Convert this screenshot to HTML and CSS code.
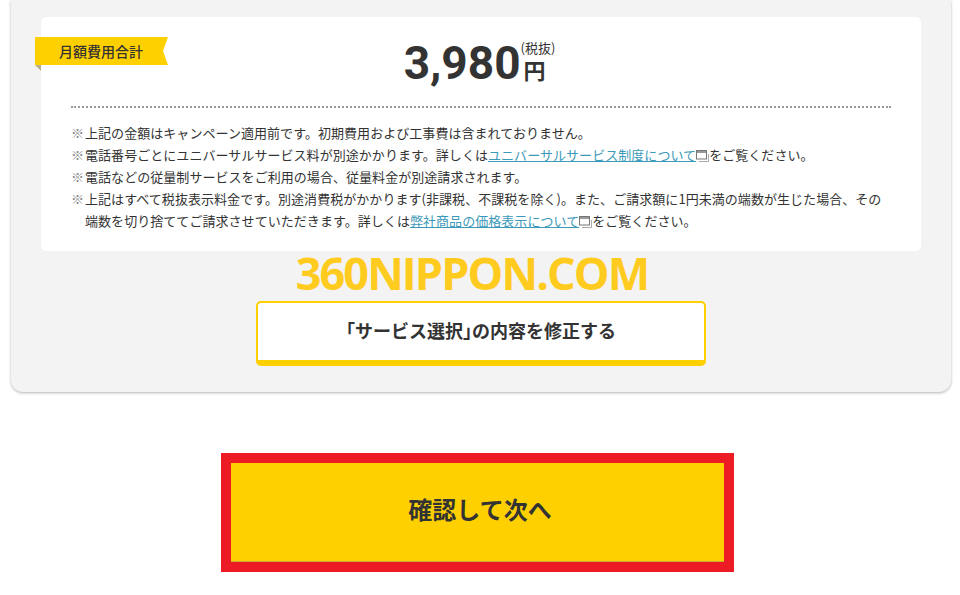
FILE: index.html
```html
<!DOCTYPE html>
<html lang="ja">
<head>
    <meta charset="UTF-8">
    <meta name="viewport" content="width=device-width, initial-scale=1.0">
    <title>確認して次へ</title>
    <link rel="stylesheet" href="styles.css">
</head>
<body>
    <svg class="icon-defs" width="0" height="0">
        <symbol id="icon-window" viewBox="0 0 13 12">
            <rect x="0.5" y="0.5" width="10" height="8.5" fill="#fff" stroke="#777"/>
            <path d="M0.5 2h10" stroke="#777" stroke-width="1.5"/>
            <path d="M3 11.5h9.5V4" fill="none" stroke="#aaa"/>
        </symbol>
    </svg>

    <section class="panel">
        <div class="card">
            <div class="ribbon">月額費用合計</div>
            <div class="price">
                <span class="price-num">3,980</span>
                <span class="price-unit">
                    <span class="tax">(税抜)</span>
                    <span class="yen">円</span>
                </span>
            </div>
            <ul class="notes">
                <li>上記の金額はキャンペーン適用前です。初期費用および工事費は含まれておりません。</li>
                <li>電話番号ごとにユニバーサルサービス料が別途かかります。詳しくは<a href="#">ユニバーサルサービス制度について</a><svg class="ext"><use href="#icon-window"/></svg>をご覧ください。</li>
                <li>電話などの従量制サービスをご利用の場合、従量料金が別途請求されます。</li>
                <li>上記はすべて税抜表示料金です。別途消費税がかかります(非課税、不課税を除く)。また、ご請求額に1円未満の端数が生じた場合、その端数を切り捨ててご請求させていただきます。詳しくは<a href="#">弊社商品の価格表示について</a><svg class="ext"><use href="#icon-window"/></svg>をご覧ください。</li>
            </ul>
        </div>
        <div class="watermark">360NIPPON.COM</div>
        <a class="btn-edit" href="#"><span class="half">「</span>サービス選択<span class="half">」</span>の内容を修正する</a>
    </section>

    <div class="next-wrap">
        <a class="btn-next" href="#">確認して次へ</a>
    </div>
</body>
</html>
```

FILE: styles.css
```css
body {
    margin: 0;
    height: 595px;
    overflow: hidden;
    background-color: #fff;
    color: #333;
    font-family: "Noto Sans CJK JP", "Noto Sans", sans-serif;
}
.icon-defs {
    display: block;
    height: 0;
}
.panel {
    box-sizing: border-box;
    width: 940px;
    height: 392px;
    margin-left: 11px;
    padding: 17px 30px 0;
    background-color: #f3f3f3;
    border-radius: 0 0 12px 12px;
    box-shadow: 0 1px 3px rgba(0, 0, 0, 0.3);
}
.card {
    position: relative;
    box-sizing: border-box;
    height: 234px;
    padding: 0 30px;
    background-color: #fff;
    border-radius: 5px;
}
.ribbon {
    position: absolute;
    top: 20px;
    left: -6px;
    width: 133px;
    height: 28px;
    padding-left: 24px;
    box-sizing: border-box;
    background-color: #ffd000;
    clip-path: polygon(0 0, 100% 0, 128px 50%, 100% 100%, 0 100%);
    font-size: 14px;
    font-weight: 500;
    line-height: 28px;
}
/* folded corner under the ribbon */
.card::before {
    content: "";
    position: absolute;
    top: 48px;
    left: -6px;
    border-top: 6px solid #b9b184;
    border-left: 6px solid transparent;
}
.price {
    display: flex;
    justify-content: center;
    align-items: flex-end;
    height: 89px;
    padding-right: 3px;
    border-bottom: 2px dotted #999;
}
.price-num {
    margin-bottom: 15px;
    font-family: Roboto, sans-serif;
    font-size: 46px;
    font-weight: 700;
    line-height: 56px;
}
.price-unit {
    display: flex;
    flex-direction: column;
    align-items: flex-start;
    margin-bottom: 23px;
}
.tax {
    font-size: 13px;
    line-height: 14px;
}
.yen {
    margin-left: 3px;
    font-size: 22px;
    font-weight: 700;
    line-height: 28px;
}
.notes {
    margin: 14px 0 0;
    padding: 0;
    list-style: none;
    font-size: 13px;
    letter-spacing: 0.05px;
    line-height: 22px;
}
.notes li {
    padding-left: 14px;
    text-indent: -14px;
}
.notes li::before {
    content: "※";
    display: inline-block;
    width: 14px;
    text-indent: 0;
    color: #888;
    font-size: 13px;
}
.notes a {
    color: #3c9ab8;
}
.ext {
    width: 13px;
    height: 12px;
    vertical-align: -2px;
}
.watermark {
    height: 50px;
    padding-right: 18px;
    color: #ffcb1f;
    font-family: "Open Sans", sans-serif;
    font-size: 45px;
    font-weight: 700;
    letter-spacing: -1.9px;
    line-height: 44px;
    text-align: center;
}
.btn-edit {
    display: block;
    box-sizing: border-box;
    width: 450px;
    height: 65px;
    margin: 0 auto;
    background-color: #fff;
    border: 2px solid #ffd000;
    border-bottom-width: 6px;
    border-radius: 5px;
    color: #333;
    font-size: 18px;
    font-weight: 700;
    line-height: 55px;
    text-align: center;
    text-decoration: none;
}
.half {
    font-feature-settings: "halt";
}
.next-wrap {
    display: flex;
    justify-content: center;
    margin: 61px 0 0 -5px;
}
.btn-next {
    box-sizing: border-box;
    width: 513px;
    height: 119px;
    padding-left: 5px;
    background-color: #ffd000;
    border: 10px solid #ed1c24;
    box-shadow: inset 0 -1px 0 #c9a93a;
    color: #333;
    font-size: 24px;
    font-weight: 700;
    line-height: 91px;
    text-align: center;
    text-decoration: none;
}
```
